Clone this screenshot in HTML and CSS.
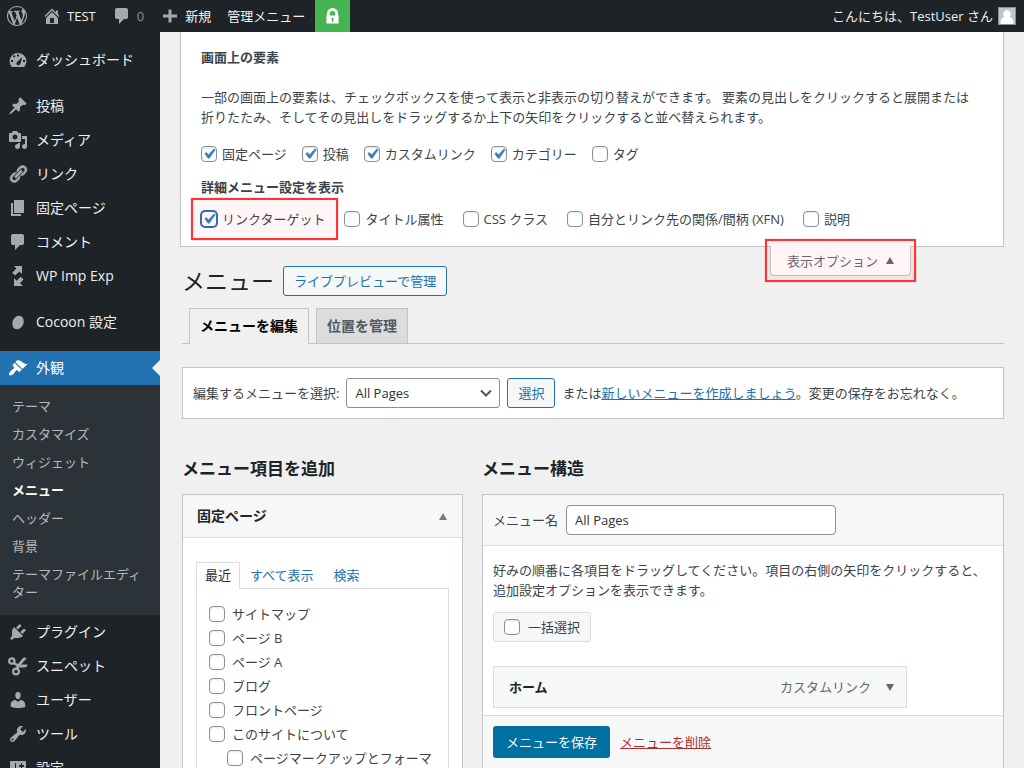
FILE: index.html
```
<!DOCTYPE html>
<html lang="ja">
<head>
<meta charset="utf-8">
<title>メニュー</title>
<link rel="stylesheet" href="styles.css">
</head>
<body>
<header class="adminbar">
  <a class="bar-item bar-logo" href="#" aria-label="WordPress"><svg class="icon" viewBox="0 0 20 20"><path d="M20 10c0-5.51-4.49-10-10-10C4.48 0 0 4.49 0 10c0 5.52 4.48 10 10 10 5.51 0 10-4.48 10-10zM7.78 15.37L4.37 6.22c.55-.02 1.17-.08 1.17-.08.5-.06.44-1.13-.06-1.11 0 0-1.45.11-2.37.11-.18 0-.37 0-.58-.01C4.12 2.69 6.87 1.11 10 1.11c2.33 0 4.45.87 6.05 2.34-.68-.11-1.65.39-1.65 1.58 0 .74.45 1.36.9 2.1.35.61.55 1.36.55 2.46 0 1.49-1.4 5-1.4 5l-3.03-8.37c.54-.02.82-.17.82-.17.5-.05.44-1.25-.06-1.22 0 0-1.44.12-2.38.12-.87 0-2.33-.12-2.33-.12-.5-.03-.56 1.2-.06 1.22l.92.08 1.26 3.41zM17.41 10c.24-.64.74-1.87.43-4.25.7 1.29 1.05 2.71 1.05 4.25 0 3.29-1.73 6.24-4.4 7.78.97-2.59 1.94-5.2 2.92-7.78zM6.1 18.09C3.12 16.65 1.11 13.53 1.11 10c0-1.3.23-2.48.72-3.59C3.25 10.3 4.67 14.2 6.1 18.09zm4.03-6.63l2.58 6.98c-.86.29-1.76.45-2.71.45-.79 0-1.57-.11-2.29-.33.81-2.38 1.62-4.74 2.42-7.1z"/></svg></a>
  <a class="bar-item" href="#"><svg class="icon" viewBox="0 0 20 20"><path d="M16 8.5l1.53 1.53-1.06 1.06L10 4.6l-6.47 6.49-1.06-1.06L10 2.5l4 4v-2h2v4zm-6-2.46l6 5.99V18H4v-5.97zM12 17v-5H8v5h4z"/></svg>TEST</a>
  <a class="bar-item muted" href="#"><svg class="icon" viewBox="0 0 20 20"><path d="M5 2h9q.82 0 1.41.59T16 4v7q0 .82-.59 1.41T14 13h-2l-5 5v-5H5q-.82 0-1.41-.59T3 11V4q0-.82.59-1.41T5 2z"/></svg>0</a>
  <a class="bar-item" href="#"><svg class="icon" viewBox="0 0 20 20"><path d="M17 8.5v3h-5.500v5h-3v-5H3v-3h5.500v-5h3v5z"/></svg>新規</a>
  <a class="bar-item" href="#">管理メニュー</a>
  <a class="bar-item bar-lock" href="#" aria-label="ロック"><svg class="lock-icon" viewBox="0 0 16 18"><path fill-rule="evenodd" d="M2 8V6a6 6 0 0 1 12 0v2h.5v8.500H1.500V8zM5 8h6V6a3 3 0 0 0-6 0zm2 2.500v2l.500.500v2h1v-2l.700-.500v-2z"/></svg></a>
  <a class="bar-item bar-user" href="#">こんにちは、TestUser さん<svg class="avatar" viewBox="0 0 18 18"><path fill="#c3c4c7" d="M0 0h18v18H0z"/><path fill="#fff" d="M9 3a4 4 0 0 1 2.500 7c3 .600 4 3 4 7h-13c0-4 1-6.400 4-7A4 4 0 0 1 9 3z"/><path fill="none" stroke="#8c8f94" d="M.5.5h17v17H.5z"/></svg></a>
</header>

<div class="shell">
  <nav class="sidebar">
    <ul class="menu">
      <li><a class="menu-link" href="#"><svg class="icon" viewBox="0 0 20 20"><path fill-rule="evenodd" d="M3.760 17A8.390 8.390 0 1 1 16.240 17zM9 4.500v2h2v-2zM4.800 6.300l1.400 1.400 1.400-1.400-1.400-1.400zM3 10v2h2v-2zm12 0v2h2v-2zM8.500 14a2 2 0 0 0 3.500.500c.600-1 2.300-7.500 2.300-7.500S9 11.500 8.500 13z"/></svg>ダッシュボード</a></li>
    </ul>
    <ul class="menu">
      <li><a class="menu-link" href="#"><svg class="icon" viewBox="0 0 20 20"><path d="M10.440 3.020l1.820-1.820 6.360 6.350-1.830 1.820c-1.050-.68-2.480-.57-3.410.36l-.75.75c-.92.93-1.040 2.350-.35 3.410l-1.830 1.820-2.410-2.410-2.800 2.790c-.42.42-3.380 2.710-3.800 2.290s1.860-3.390 2.280-3.810l2.790-2.790L4.100 9.360l1.830-1.820c1.050.69 2.480.57 3.400-.36l.75-.75c.93-.92 1.050-2.350.36-3.410z"/></svg>投稿</a></li>
      <li><a class="menu-link" href="#"><svg class="icon" viewBox="0 0 20 20"><path d="M13 11V4c0-.55-.45-1-1-1h-1.670L9 1H5L3.670 3H2c-.55 0-1 .45-1 1v7c0 .55.45 1 1 1h10c.55 0 1-.45 1-1zM7 4.500c1.380 0 2.500 1.120 2.500 2.500S8.380 9.500 7 9.500 4.500 8.380 4.500 7 5.620 4.500 7 4.500zM14 6h5v10.500c0 1.380-1.120 2.500-2.500 2.500S14 17.880 14 16.500s1.120-2.500 2.500-2.500c.17 0 .34.020.5.050V9h-3V6zm-4 8.050V13h2v3.500c0 1.380-1.120 2.500-2.500 2.500S7 17.880 7 16.500 8.120 14 9.500 14c.17 0 .34.020.5.050z"/></svg>メディア</a></li>
      <li><a class="menu-link" href="#"><svg class="icon" viewBox="0 0 20 20"><path stroke="currentColor" stroke-width=".5" d="M17.740 2.760c1.680 1.690 1.680 4.410 0 6.100l-1.530 1.520c-1.120 1.120-2.700 1.470-4.140 1.090l2.620-2.610.76-.77.76-.76c.84-.84.84-2.200 0-3.040-.84-.85-2.200-.85-3.040 0l-.77.76-3.380 3.380c-.37-1.440-.02-3.020 1.100-4.140l1.520-1.530c1.690-1.680 4.420-1.680 6.100 0zM8.590 13.430l5.340-5.340c.42-.42.42-1.100 0-1.520-.44-.43-1.130-.39-1.530 0l-5.330 5.340c-.42.42-.42 1.100 0 1.520.44.43 1.130.39 1.520 0zm-.76 2.290l4.140-4.150c.38 1.440.03 3.020-1.090 4.140l-1.520 1.530c-1.690 1.680-4.410 1.680-6.100 0-1.680-1.680-1.680-4.420 0-6.100l1.530-1.520c1.120-1.120 2.700-1.470 4.140-1.100l-4.140 4.150c-.85.84-.85 2.200 0 3.050.84.84 2.200.84 3.040 0z"/></svg>リンク</a></li>
      <li><a class="menu-link" href="#"><svg class="icon" viewBox="0 0 20 20"><path d="M6 15V2h10v13H6zm-1 1h8v2H3V5h2v11z"/></svg>固定ページ</a></li>
      <li><a class="menu-link" href="#"><svg class="icon" viewBox="0 0 20 20"><path d="M5 2h9q.82 0 1.410.59T16 4v7q0 .82-.59 1.410T14 13h-2l-5 5v-5H5q-.82 0-1.410-.59T3 11V4q0-.82.59-1.410T5 2z"/></svg>コメント</a></li>
      <li><a class="menu-link" href="#"><svg class="icon" viewBox="0 0 20 20"><path d="M6 0h8v8l-2.500-2.500L7 9.500 4.200 6.700 8.500 2.500zM15.500 13.500L12.700 10.700l-4 4L6 12v8h9l-3-2.700z"/></svg>WP Imp Exp</a></li>
    </ul>
    <ul class="menu">
      <li><a class="menu-link" href="#"><svg class="icon" viewBox="0 0 20 20"><ellipse cx="10" cy="10.500" rx="5.500" ry="7" transform="rotate(22 10 10.500)"/></svg>Cocoon 設定</a></li>
    </ul>
    <ul class="menu">
      <li>
        <a class="menu-link current" href="#"><svg class="icon" viewBox="0 0 20 20"><path d="M14.480 11.060L7.410 3.990l1.500-1.500c.5-.56 2.300-.47 3.510.32 1.210.8 1.430 1.280 2.910 2.100 1.180.64 2.450 1.260 4.450.85zm-.71.71L6.700 4.700 4.930 6.470c-.39.39-.39 1.020 0 1.410l1.060 1.060c.39.39.39 1.030 0 1.420-.6.6-1.430 1.110-2.210 1.690-.35.26-.7.53-1.010.84C1.430 14.230.4 16.080 1.400 17.070c.99 1 2.840-.03 4.180-1.360.31-.31.58-.66.85-1.020.57-.78 1.080-1.610 1.690-2.210.39-.39 1.020-.39 1.410 0l1.060 1.060c.39.39 1.020.39 1.410 0z"/></svg>外観</a>
        <ul class="submenu">
          <li><a href="#">テーマ</a></li>
          <li><a href="#">カスタマイズ</a></li>
          <li><a href="#">ウィジェット</a></li>
          <li><a class="active" href="#">メニュー</a></li>
          <li><a href="#">ヘッダー</a></li>
          <li><a href="#">背景</a></li>
          <li><a href="#">テーマファイルエディター</a></li>
        </ul>
      </li>
      <li><a class="menu-link" href="#"><svg class="icon" viewBox="0 0 20 20"><path d="M13.110 4.360L9.870 7.600 8 5.730l3.240-3.240c.35-.34 1.050-.2 1.560.32.520.510.660 1.210.310 1.550zm-8 1.770l.91-1.120 9.010 9.010-1.190.84c-.71.71-2.630 1.160-3.820 1.160H6.140L4.900 17.260c-.59.59-1.540.59-2.120 0-.59-.58-.59-1.530 0-2.120l1.240-1.240v-3.880c0-1.130.4-3.190 1.090-3.890zm7.260 3.970l3.240-3.240c.34-.35 1.040-.21 1.550.31.52.51.66 1.210.31 1.550l-3.240 3.250z"/></svg>プラグイン</a></li>
      <li><a class="menu-link" href="#"><svg class="icon" viewBox="0 0 20 20"><g fill="none" stroke="currentColor" stroke-width="2.200"><circle cx="3.800" cy="5" r="2.700"/><circle cx="8" cy="15.500" r="2.900"/></g><path d="M6 6l4 2 5-6c1.500-1 3-.5 3.500.500L13 8.500h6.500c0 2-1.500 3-3.500 3h-5l-1.500 2.500-2.300-.500L8.500 10 5 8z"/></svg>スニペット</a></li>
      <li><a class="menu-link" href="#"><svg class="icon" viewBox="0 0 20 20"><path d="M10 9.250c-2.270 0-2.730-3.440-2.730-3.440C7 4.020 7.820 2 9.970 2c2.160 0 2.980 2.020 2.710 3.810 0 0-.41 3.440-2.680 3.440zm0 2.570L12.720 10c2.390 0 4.520 2.330 4.520 4.530v2.490s-3.650 1.130-7.240 1.130c-3.650 0-7.240-1.130-7.240-1.130v-2.490c0-2.250 1.940-4.480 4.470-4.480z"/></svg>ユーザー</a></li>
      <li><a class="menu-link" href="#"><svg class="icon" viewBox="0 0 20 20"><path d="M16.680 9.770c-1.340 1.340-3.300 1.670-4.950.99l-5.410 6.520c-.99.99-2.590.99-3.580 0s-.99-2.590 0-3.570l6.520-5.420c-.68-1.650-.35-3.610.99-4.950 1.280-1.280 3.120-1.620 4.720-1.060l-2.890 2.890 2.820 2.820 2.860-2.870c.53 1.580.18 3.390-1.080 4.650zM3.810 16.210c.4.39 1.040.39 1.430 0 .4-.4.4-1.040 0-1.430-.39-.4-1.030-.4-1.430 0-.39.39-.39 1.030 0 1.430z"/></svg>ツール</a></li>
      <li><a class="menu-link" href="#"><svg class="icon" viewBox="0 0 20 20"><path d="M18 16V4c0-.55-.45-1-1-1H3c-.55 0-1 .45-1 1v12c0 .55.45 1 1 1h14c.55 0 1-.45 1-1zM8 11h1c.55 0 1 .45 1 1s-.45 1-1 1H8v1.500c0 .28-.22.5-.5.5s-.5-.22-.5-.5V13H6c-.55 0-1-.45-1-1s.45-1 1-1h1V5.500c0-.28.22-.5.5-.5s.5.220.5.500V11zm5-2h-1c-.55 0-1-.45-1-1s.45-1 1-1h1V5.500c0-.28.22-.5.5-.5s.5.220.5.500V7h1c.55 0 1 .45 1 1s-.45 1-1 1h-1v5.500c0 .28-.22.5-.5.5s-.5-.22-.5-.5V9z"/></svg>設定</a></li>
    </ul>
  </nav>

  <main class="content">
    <section class="screen-meta">
      <h2 class="meta-title">画面上の要素</h2>
      <p class="meta-text">一部の画面上の要素は、チェックボックスを使って表示と非表示の切り替えができます。 要素の見出しをクリックすると展開または折りたたみ、そしてその見出しをドラッグするか上下の矢印をクリックすると並べ替えられます。</p>
      <div class="checks">
        <label class="check"><input type="checkbox" checked>固定ページ</label>
        <label class="check"><input type="checkbox" checked>投稿</label>
        <label class="check"><input type="checkbox" checked>カスタムリンク</label>
        <label class="check"><input type="checkbox" checked>カテゴリー</label>
        <label class="check"><input type="checkbox">タグ</label>
      </div>
      <h2 class="meta-title">詳細メニュー設定を表示</h2>
      <div class="checks checks-wide">
        <label class="check callout callout-check"><input class="focused" type="checkbox" checked>リンクターゲット</label>
        <label class="check"><input type="checkbox">タイトル属性</label>
        <label class="check"><input type="checkbox">CSS クラス</label>
        <label class="check"><input type="checkbox">自分とリンク先の関係/間柄 (XFN)</label>
        <label class="check"><input type="checkbox">説明</label>
      </div>
      <div class="options-tab callout"><button class="options-button" type="button">表示オプション <span class="arrow-up"></span></button></div>
    </section>

    <div class="page">
      <div class="title-row">
        <h1 class="page-title">メニュー</h1>
        <a class="button" href="#">ライブプレビューで管理</a>
      </div>
      <nav class="tabs">
        <a class="tab tab-active" href="#">メニューを編集</a>
        <a class="tab" href="#">位置を管理</a>
      </nav>

      <form class="manage">
        <label for="menu-select">編集するメニューを選択:</label>
        <select id="menu-select" class="select"><option>All Pages</option></select>
        <button class="button" type="button">選択</button>
        <span>または<a class="link" href="#">新しいメニューを作成しましょう</a>。変更の保存をお忘れなく。</span>
      </form>

      <div class="columns">
        <section class="column">
          <h2 class="column-title">メニュー項目を追加</h2>
          <div class="box">
            <h3 class="box-head accordion">固定ページ<span class="arrow-up"></span></h3>
            <div class="accordion-body">
              <div class="subtabs">
                <a class="subtab subtab-active" href="#">最近</a>
                <a class="subtab" href="#">すべて表示</a>
                <a class="subtab" href="#">検索</a>
              </div>
              <div class="page-list">
                <label class="check"><input type="checkbox">サイトマップ</label>
                <label class="check"><input type="checkbox">ページ B</label>
                <label class="check"><input type="checkbox">ページ A</label>
                <label class="check"><input type="checkbox">ブログ</label>
                <label class="check"><input type="checkbox">フロントページ</label>
                <label class="check"><input type="checkbox">このサイトについて</label>
                <label class="check child"><input type="checkbox">ページマークアップとフォーマ</label>
              </div>
            </div>
          </div>
        </section>

        <section class="column">
          <h2 class="column-title">メニュー構造</h2>
          <div class="box">
            <div class="box-head name-row">
              <label for="menu-name">メニュー名</label>
              <input id="menu-name" class="text-input" type="text" value="All Pages">
            </div>
            <div class="structure">
              <p class="structure-text">好みの順番に各項目をドラッグしてください。項目の右側の矢印をクリックすると、追加設定オプションを表示できます。</p>
              <label class="check bulk"><input type="checkbox">一括選択</label>
              <div class="menu-item"><strong>ホーム</strong><span class="item-type">カスタムリンク</span><span class="arrow-down"></span></div>
            </div>
            <div class="box-foot">
              <button class="primary" type="button">メニューを保存</button>
              <a class="link link-danger" href="#">メニューを削除</a>
            </div>
          </div>
        </section>
      </div>
    </div>
  </main>
</div>
</body>
</html>
```
FILE: styles.css
```
* { box-sizing: border-box; }

body {
  display: flex;
  flex-direction: column;
  height: 100vh;
  margin: 0;
  overflow: hidden;
  background: #f0f0f1;
  color: #3c434a;
  font: 13px/20px "Open Sans", "Noto Sans CJK JP", sans-serif;
}

h1, h2, h3, p, ul { margin: 0; padding: 0; }
ul { list-style: none; }
a { color: #2271b1; text-decoration: none; }
button, input, select { margin: 0; font: inherit; }

.icon { flex: none; width: 20px; height: 20px; fill: currentColor; color: #a7aaad; }

/* Top bar */
.adminbar { display: flex; flex: none; height: 32px; background: #1d2327; }
.bar-item { display: flex; align-items: center; gap: 5px; padding: 0 8px; color: #f0f0f1; white-space: nowrap; }
.bar-logo { padding: 0 7px; }
.bar-item.muted { color: #8c8f94; }
.bar-lock { justify-content: center; width: 35px; margin-left: 2px; background: #46b450; }
.lock-icon { flex: none; width: 15px; height: 17px; fill: #fff; }
.bar-user { margin-left: auto; }
.avatar { width: 18px; height: 18px; }

/* Side navigation */
.shell { display: flex; flex: 1; min-height: 0; }
.sidebar { display: flex; flex: none; flex-direction: column; gap: 12px; width: 160px; padding-top: 11px; background: #1d2327; overflow: hidden; }
.menu-link { display: flex; align-items: center; gap: 8px; height: 34px; padding-left: 8px; color: #f0f0f1; font-size: 14px; }
.current { position: relative; background: #2271b1; color: #fff; }
.current .icon { color: #fff; }
.current::after { content: ""; position: absolute; top: 9px; right: 0; border: 8px solid transparent; border-right-color: #f0f0f1; border-left: 0; }
.submenu { padding: 7px 0 9px; background: #2c3338; line-height: 18px; }
.submenu a { display: block; padding: 5px 12px; color: #b5b8bb; }
.submenu .active { color: #fff; font-weight: 700; }

/* Main area */
.content { flex: 1; min-width: 0; padding: 0 20px; }

.screen-meta { position: relative; padding: 15px 20px 16px; border: 1px solid #c3c4c7; border-top: 0; background: #fff; }
.meta-title { font-size: 13px; font-weight: 700; }
.meta-text { padding: 20px 10px 17px 0; }
.checks { display: flex; gap: 15px; padding-bottom: 13px; }
.checks-wide { gap: 19px; padding: 12px 0 1px; }
.check { display: flex; align-items: center; gap: 5px; position: relative; white-space: nowrap; }
.check input { appearance: none; flex: none; width: 16px; height: 16px; border: 1px solid #8c8f94; border-radius: 4px; background: #fff; box-shadow: inset 0 1px 2px rgba(0, 0, 0, 0.1); }
.check input:checked { background: #fff url("data:image/svg+xml;utf8,<svg xmlns='http://www.w3.org/2000/svg' viewBox='0 0 20 20'><path d='M14.83 4.890l1.340.940-5.810 8.380H9.020L5.780 9.670l1.340-1.250 2.570 2.400z' fill='%233582c4' stroke='%233582c4' stroke-width='.6'/></svg>") center / 20px 20px; }
.check .focused { border-color: #2271b1; box-shadow: 0 0 0 1px #2271b1; }

/* Red annotation frames */
.callout::after { content: ""; position: absolute; border: 2px solid #f33; background: rgba(255, 50, 70, 0.05); box-shadow: 0 0 1px #f66; pointer-events: none; }
.callout-check::after { inset: -11px -13px -11px -10px; }

.options-tab { position: absolute; top: 100%; right: 92px; }
.options-tab::after { inset: -7px -5px -6px; }
.options-button { display: flex; align-items: center; gap: 8px; height: 30px; padding: 0 16px; border: 1px solid #c3c4c7; border-top: 0; border-radius: 0 0 4px 4px; background: #fff; color: #646970; }
.arrow-up { border: 4px solid transparent; border-top: 0; border-bottom: 7px solid currentColor; }
.arrow-down { border: 4px solid transparent; border-bottom: 0; border-top: 7px solid currentColor; color: #646970; }

.page { padding: 19px 0 0 2px; }
.title-row { display: flex; align-items: center; gap: 9px; }
.page-title { color: #1d2327; font-size: 23px; font-weight: 400; line-height: 30px; }
.button { height: 30px; padding: 0 10px; border: 1px solid #2271b1; border-radius: 3px; background: #f6f7f7; color: #2271b1; line-height: 28px; }

.tabs { display: flex; gap: 7px; margin-top: 12px; padding-left: 7px; border-bottom: 1px solid #c3c4c7; }
.tab { height: 35px; padding: 0 10px; border: 1px solid #c3c4c7; border-bottom: 0; background: #dcdcde; color: #50575e; font-size: 14px; font-weight: 700; line-height: 34px; }
.tab-active { height: 36px; margin-bottom: -1px; background: #f0f0f1; color: #000; }

.manage { display: flex; align-items: center; gap: 7px; margin-top: 23px; padding: 10px; border: 1px solid #c3c4c7; background: #fff; white-space: nowrap; }
.select { appearance: none; width: 154px; height: 30px; padding: 0 8px; border: 1px solid #8c8f94; border-radius: 3px; background: #fff url("data:image/svg+xml;utf8,<svg xmlns='http://www.w3.org/2000/svg' viewBox='0 0 12 8'><path d='M1 1.500l5 5 5-5' fill='none' stroke='%2350575e' stroke-width='2'/></svg>") no-repeat right 7px center / 12px 8px; color: #2c3338; }
.link { text-decoration: underline; }
.link-danger { color: #b32d2e; }

.columns { display: grid; grid-template-columns: 281px minmax(0, 1fr); gap: 19px; margin-top: 38px; }
.column-title { margin-bottom: 13px; color: #1d2327; font-size: 17px; font-weight: 700; line-height: 24px; }
.box { border: 1px solid #c3c4c7; background: #fff; }
.box-head { display: flex; align-items: center; border-bottom: 1px solid #dcdcde; background: #f6f7f7; }
.accordion { justify-content: space-between; height: 43px; padding: 0 15px 0 14px; color: #1d2327; font-size: 14px; font-weight: 700; }
.accordion .arrow-up { color: #787c82; }
.accordion-body { padding: 24px 13px; }
.subtabs { display: flex; position: relative; margin-bottom: -1px; }
.subtab { height: 27px; padding: 0 9px; border: 1px solid transparent; border-bottom: 0; line-height: 25px; }
.subtab-active { padding: 0 8px; border-color: #dcdcde; background: #fff; color: #2c3338; }
.page-list { padding: 13px 12px; border: 1px solid #dcdcde; line-height: 24px; }
.page-list .check { gap: 7px; }
.page-list .child { margin-left: 18px; }

.name-row { gap: 8px; padding: 10px; }
.text-input { width: 270px; height: 30px; padding: 0 8px; border: 1px solid #8c8f94; border-radius: 4px; background: #fff; color: #2c3338; }
.structure { padding: 14px 10px 7px; }
.structure-text { margin-bottom: 12px; }
.bulk { display: inline-flex; gap: 8px; height: 30px; padding: 0 10px; border: 1px solid #dcdcde; border-radius: 3px; background: #f6f7f7; vertical-align: top; }
.menu-item { display: flex; align-items: center; max-width: 414px; height: 42px; margin-top: 24px; padding: 0 12px 0 15px; border: 1px solid #dcdcde; background: #f6f7f7; color: #1d2327; }
.item-type { margin: 0 15px 0 auto; color: #646970; }
.box-foot { display: flex; align-items: center; gap: 10px; padding: 10px; border-top: 1px solid #dcdcde; background: #f6f7f7; }
.primary { height: 32px; padding: 0 13px; border: 0; border-radius: 3px; background: #0071a1; color: #fff; }
```
